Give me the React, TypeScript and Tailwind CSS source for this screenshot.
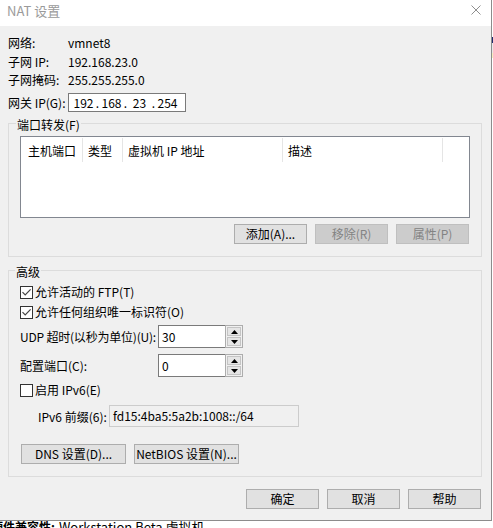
import React from "react";

type BtnProps = { children: React.ReactNode; w: string; disabled?: boolean };

function Btn({ children, w, disabled }: BtnProps) {
  const tone = disabled
    ? "bg-[#cccccc] border-[#bfbfbf] text-[#838383]"
    : "bg-[#e1e1e1] border-[#adadad] text-black";
  return (
    <div className={`h-[20px] ${w} shrink-0 flex items-center justify-center border ${tone} text-[12px] leading-[16px] whitespace-nowrap`}>
      {children}
    </div>
  );
}

function Check({ checked }: { checked?: boolean }) {
  return (
    <div className="w-[13px] h-[13px] shrink-0 border border-[#333333] bg-white flex items-center justify-center">
      {checked && (
        <svg width="11" height="11" viewBox="0 0 11 11">
          <path d="M1.5 5.2 L4.2 8 L9.6 2.4" stroke="#444" strokeWidth="1.2" fill="none" />
        </svg>
      )}
    </div>
  );
}

function Spin() {
  return (
    <div className="w-[18px] h-full shrink-0 flex flex-col gap-[1px] border border-[#adadad] bg-[#f0f0f0] p-[1px]">
      <div className="flex-1 bg-[#e5e5e5] border border-[#c4c4c4] flex items-center justify-center">
        <svg width="7" height="4" viewBox="0 0 7 4">
          <path d="M0 4 L3.5 0 L7 4 Z" fill="#000" />
        </svg>
      </div>
      <div className="flex-1 bg-[#e5e5e5] border border-[#c4c4c4] flex items-center justify-center">
        <svg width="7" height="4" viewBox="0 0 7 4">
          <path d="M0 0 L3.5 4 L7 0 Z" fill="#000" />
        </svg>
      </div>
    </div>
  );
}

function InfoRow({ label, value, className }: { label: string; value: string; className: string }) {
  return (
    <div className={`flex items-center h-[18px] ${className}`}>
      <div className="w-[60px] shrink-0 whitespace-nowrap">{label}</div>
      <div>{value}</div>
    </div>
  );
}

function Legend({ children, ml }: { children: React.ReactNode; ml: string }) {
  return <div className={`-mt-[7px] ${ml} w-fit px-[1px] bg-[#f0f0f0] leading-[16px]`}>{children}</div>;
}

function HeadCell({ w, pl, children }: { w: string; pl: string; children?: React.ReactNode }) {
  return (
    <div className={`${w} shrink-0 h-full py-[1px]`}>
      <div className={`h-full border-r border-[#e5e5e5] flex items-center ${pl} pt-[1px] whitespace-nowrap`}>{children}</div>
    </div>
  );
}

export default function App() {
  return (
    <div className="w-[493px] h-[528px] overflow-hidden bg-white text-[12px] text-black font-['Noto_Sans_CJK_SC',sans-serif]">
      <div className="flex">
        {/* dialog window */}
        <div className="w-[492px] h-[521px] shrink-0 flex flex-col border-r border-b border-[#8c8c8c]">
          {/* title bar */}
          <div className="h-[26px] shrink-0 bg-white flex items-start justify-between pl-[7px] pr-[10px]">
            <div className="mt-[3px] text-[13px] leading-[16px] text-[#9a9a9a]">NAT 设置</div>
            <svg className="mt-[5px]" width="10" height="10" viewBox="0 0 10 10">
              <path d="M0.5 0.5 L9.5 9.5 M9.5 0.5 L0.5 9.5" stroke="#8f8f8f" strokeWidth="1" />
            </svg>
          </div>

          {/* body */}
          <div className="flex-1 bg-[#f0f0f0] flex flex-col pt-[8px] pl-[8px] pr-[9px]">
            <InfoRow label="网络:" value="vmnet8" className="" />
            <InfoRow label="子网 IP:" value="192.168.23.0" className="mt-[1px]" />
            <InfoRow label="子网掩码:" value="255.255.255.0" className="" />
            <div className="flex items-center h-[19px] mt-[4px]">
              <div className="w-[60px] shrink-0 whitespace-nowrap">网关 IP(G):</div>
              <div className="w-[118px] h-full border border-[#7a7a7a] bg-white flex items-center pl-[4px]">
                <span className="w-[21px] text-center">192</span>
                <span className="w-[7px] text-center">.</span>
                <span className="w-[21px] text-center">168</span>
                <span className="w-[7px] text-center">.</span>
                <span className="w-[21px] text-center">23</span>
                <span className="w-[7px] text-center">.</span>
                <span className="w-[21px] text-center">254</span>
              </div>
            </div>

            {/* port forwarding group */}
            <div className="mt-[11px] border border-[#dcdcdc] flex flex-col pb-[12px]">
              <Legend ml="ml-[7px]">端口转发(F)</Legend>
              <div className="mt-[3px] ml-[11px] w-[450px] h-[82px] border border-[#828790] bg-white">
                <div className="flex h-[26px]">
                  <HeadCell w="w-[62px]" pl="pl-[7px]">主机端口</HeadCell>
                  <HeadCell w="w-[40px]" pl="pl-[5px]">类型</HeadCell>
                  <HeadCell w="w-[160px]" pl="pl-[5px]">虚拟机 IP 地址</HeadCell>
                  <HeadCell w="w-[160px]" pl="pl-[5px]">描述</HeadCell>
                </div>
              </div>
              <div className="mt-[6px] flex justify-end gap-[8px] pr-[12px]">
                <Btn w="w-[73px]">添加(A)...</Btn>
                <Btn w="w-[73px]" disabled>移除(R)</Btn>
                <Btn w="w-[73px]" disabled>属性(P)</Btn>
              </div>
            </div>

            {/* advanced group */}
            <div className="mt-[13px] border border-[#dcdcdc] flex flex-col pb-[12px]">
              <Legend ml="ml-[6px]">高级</Legend>
              <div className="flex flex-col pl-[11px]">
                <div className="mt-[2px] h-[20px] flex items-center gap-[2px]">
                  <Check checked />
                  <span>允许活动的 FTP(T)</span>
                </div>
                <div className="h-[20px] flex items-center gap-[2px]">
                  <Check checked />
                  <span>允许任何组织唯一标识符(O)</span>
                </div>
                <div className="mt-[3px] h-[23px] flex items-center">
                  <div className="w-[138px] shrink-0 whitespace-nowrap tracking-[-0.2px]">UDP 超时(以秒为单位)(U):</div>
                  <div className="w-[67px] h-full border border-r-0 border-[#7a7a7a] bg-white flex items-center pl-[3px]">30</div>
                  <Spin />
                </div>
                <div className="mt-[6px] h-[23px] flex items-center">
                  <div className="w-[138px] shrink-0 whitespace-nowrap">配置端口(C):</div>
                  <div className="w-[67px] h-full border border-r-0 border-[#7a7a7a] bg-white flex items-center pl-[3px]">0</div>
                  <Spin />
                </div>
                <div className="mt-[3px] h-[20px] flex items-center gap-[2px]">
                  <Check />
                  <span>启用 IPv6(E)</span>
                </div>
                <div className="mt-[5px] h-[22px] flex items-center pl-[18px]">
                  <div className="w-[71px] shrink-0 mt-[2px] whitespace-nowrap">IPv6 前缀(6):</div>
                  <div className="w-[190px] h-full border border-[#cccccc] bg-[#f0f0f0] pl-[3px] pt-[1px] leading-[18px]">
                    fd15:4ba5:5a2b:1008::/64
                  </div>
                </div>
                <div className="mt-[17px] ml-[1px] flex gap-[8px]">
                  <Btn w="w-[105px]">DNS 设置(D)...</Btn>
                  <Btn w="w-[105px]">NetBIOS 设置(N)...</Btn>
                </div>
              </div>
            </div>

            {/* dialog buttons */}
            <div className="mt-[12px] mr-[1px] flex justify-end gap-[8px]">
              <Btn w="w-[73px]">确定</Btn>
              <Btn w="w-[73px]">取消</Btn>
              <Btn w="w-[73px]">帮助</Btn>
            </div>
          </div>
        </div>

        {/* sliver of the window behind */}
        <div className="w-[1px] flex flex-col">
          <div className="h-[37px]" />
          <div className="h-[6px] bg-[#1f2a6e]" />
          <div className="h-[10px] bg-[#e8e8e8]" />
          <div className="h-[5px] bg-[#f5f0c0]" />
        </div>
      </div>

      {/* text of the page behind */}
      <div className="-mt-[2px] -ml-[9px] whitespace-nowrap leading-[16px] flex items-baseline">
        <span className="font-bold">硬件兼容性:</span>
        <span className="ml-[4px] text-[13px]">Workstation Beta 虚拟机</span>
      </div>
    </div>
  );
}
